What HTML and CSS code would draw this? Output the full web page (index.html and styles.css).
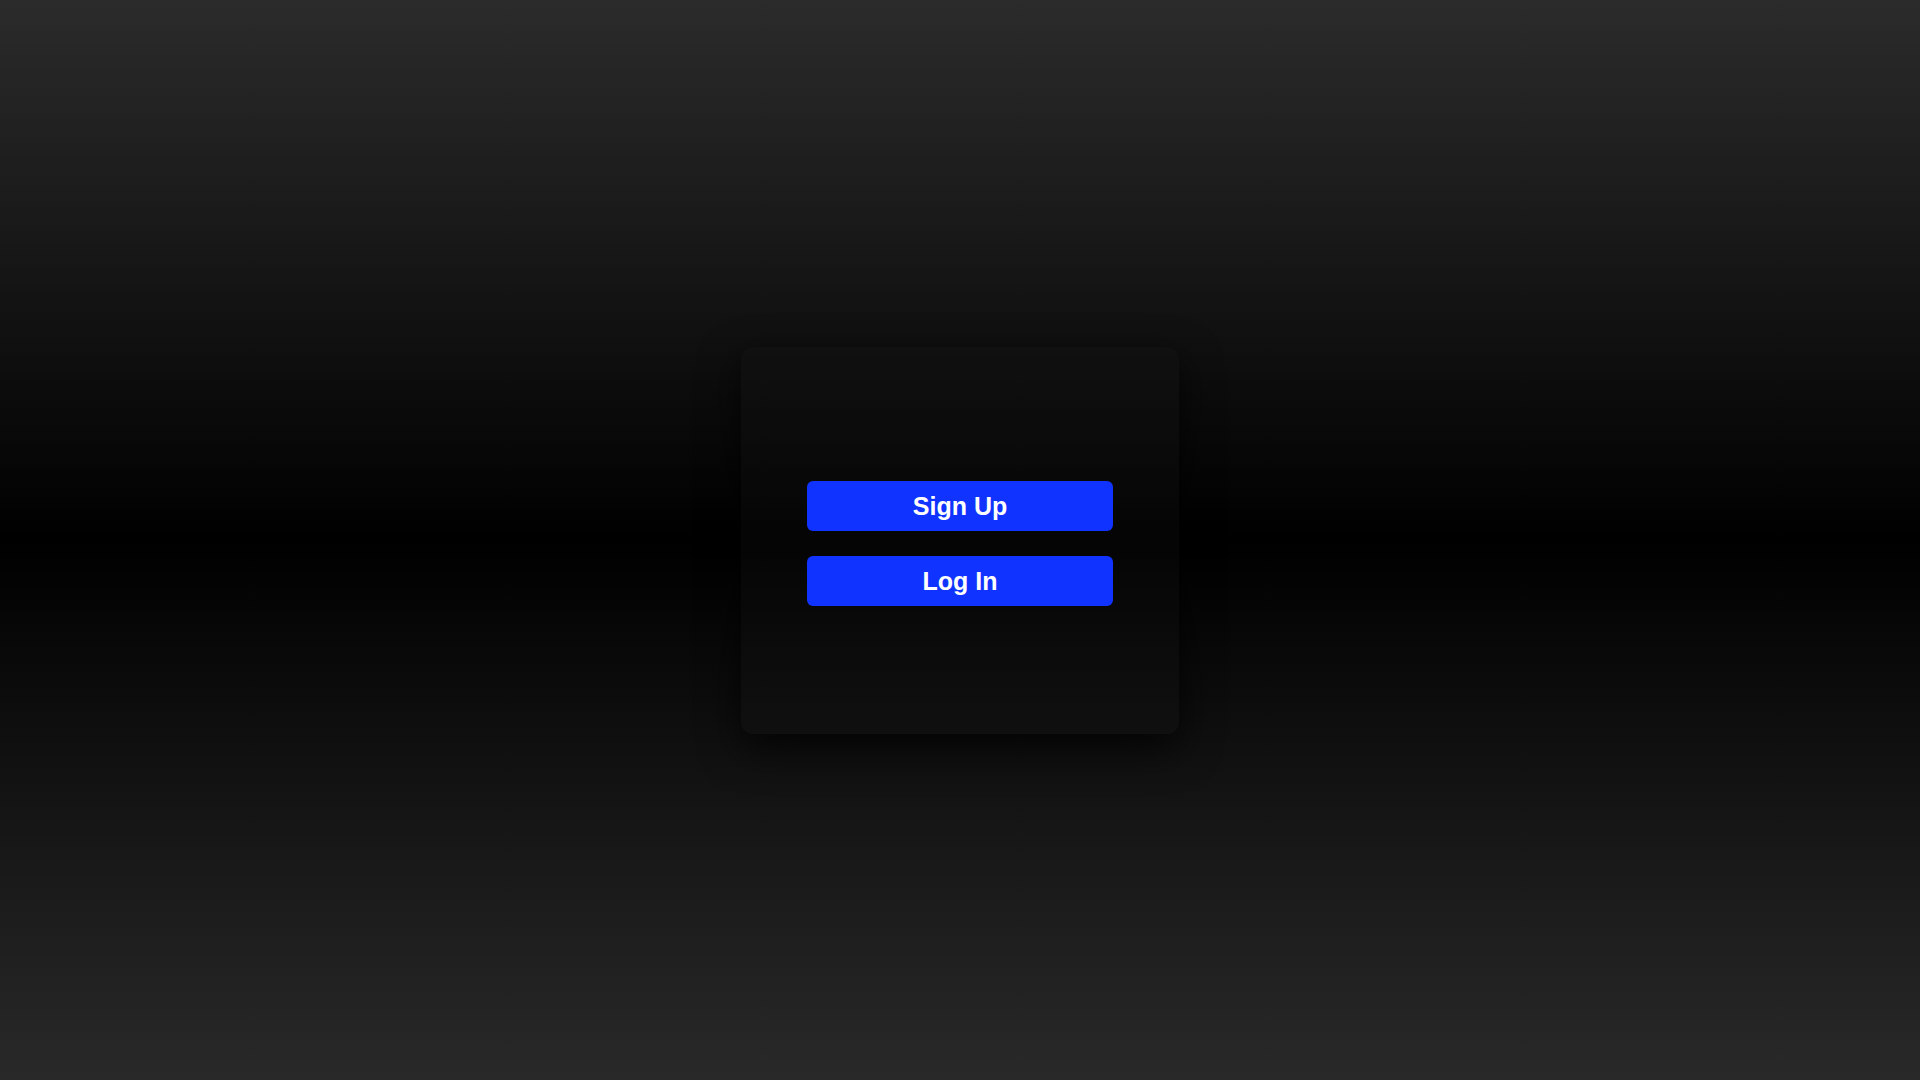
FILE: index.html
```html
<!DOCTYPE html>
<html lang="en">
<head>
<meta charset="utf-8">
<title>Welcome</title>
<link rel="stylesheet" href="styles.css">
</head>
<body>
<main class="page">
  <section class="card">
    <button class="btn" type="button">Sign Up</button>
    <button class="btn" type="button">Log In</button>
  </section>
</main>
</body>
</html>
```
FILE: styles.css
```css
html, body {
  margin: 0;
  padding: 0;
  height: 100%;
}
body {
  background: linear-gradient(to bottom, #2b2b2b 0%, #000000 50%, #292929 100%);
  font-family: "Liberation Sans", Arial, sans-serif;
}
.page {
  height: 100vh;
  display: flex;
  align-items: center;
  justify-content: center;
}
.card {
  box-sizing: border-box;
  width: 438px;
  height: 387px;
  padding: 134px 66px 0;
  border-radius: 12px;
  background: rgba(25, 25, 25, 0.22);
  box-shadow: 0 14px 40px rgba(0, 0, 0, 0.75);
  display: flex;
  flex-direction: column;
  gap: 25px;
}
.btn {
  box-sizing: border-box;
  height: 50px;
  width: 100%;
  border: none;
  border-radius: 6px;
  background: #1033ff;
  color: #ffffff;
  font-family: "Liberation Sans", Arial, sans-serif;
  font-weight: 700;
  font-size: 25px;
  padding: 2px 0 0;
  cursor: pointer;
}
```
